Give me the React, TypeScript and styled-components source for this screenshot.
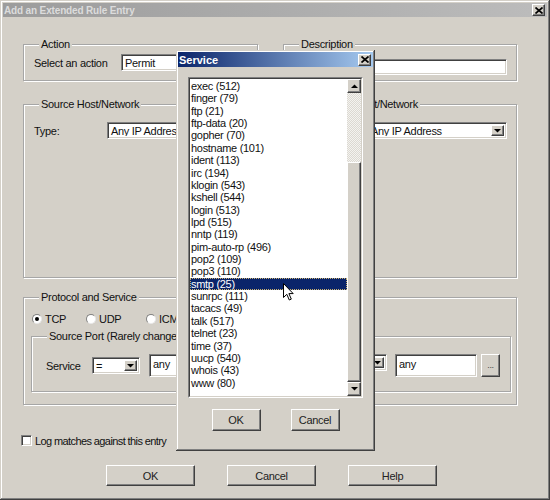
import styled, { createGlobalStyle, css } from 'styled-components';

const GlobalStyle = createGlobalStyle`
  body {
    margin: 0;
    background: #d4d0c8;
    font-family: "Liberation Sans", Arial, sans-serif;
    font-size: 11px;
    letter-spacing: -0.3px;
    color: #111;
  }
`;

const raised = css`
  background: #d4d0c8;
  border: 1px solid;
  border-color: #fff #404040 #404040 #fff;
  box-shadow: inset -1px -1px 0 #808080;
  box-sizing: border-box;
`;

const sunken = css`
  background: #fff;
  border: 1px solid;
  border-color: #808080 #fff #fff #808080;
  box-shadow: inset 1px 1px 0 #404040, inset -1px -1px 0 #d4d0c8;
  box-sizing: border-box;
`;

const Window = styled.div`
  position: relative;
  width: 550px;
  height: 500px;
  box-sizing: border-box;
  padding: 3px;
  background: #d4d0c8;
  box-shadow: inset -1px -1px 0 #404040, inset 1px 1px 0 #d4d0c8,
    inset -2px -2px 0 #808080, inset 2px 2px 0 #fff;
  overflow: hidden;
`;

const TitleBar = styled.div<{ $active?: boolean; $h: number }>`
  display: flex;
  align-items: center;
  justify-content: space-between;
  height: ${(p) => p.$h}px;
  padding: 0 2px 0 1px;
  background: ${(p) =>
    p.$active
      ? 'linear-gradient(90deg, #0a246a, #a6caf0)'
      : 'linear-gradient(90deg, #9c9c9c, #bcbcbc)'};
`;

const TitleText = styled.span<{ $active?: boolean }>`
  font-weight: bold;
  font-size: ${(p) => (p.$active ? '11px' : '10px')};
  letter-spacing: ${(p) => (p.$active ? '0' : '-0.15px')};
  color: ${(p) => (p.$active ? '#fff' : '#dcdcdc')};
  white-space: nowrap;
`;

const CloseBtn = styled.div`
  ${raised};
  width: 13px;
  height: 12px;
  display: flex;
  align-items: center;
  justify-content: center;
`;

const Body = styled.div`
  padding: 21px 30px 0 20px;
`;

const Row = styled.div<{ $cols: string; $gap: number; $mt?: number }>`
  display: grid;
  grid-template-columns: ${(p) => p.$cols};
  column-gap: ${(p) => p.$gap}px;
  margin-top: ${(p) => p.$mt ?? 0}px;
`;

const Group = styled.fieldset`
  margin: 0;
  padding: 0;
  min-width: 0;
  border: 1px solid #a6a6a6;
  box-shadow: 1px 1px 0 #fff, inset 1px 1px 0 #fff;
`;

const Legend = styled.legend`
  margin-left: 15px;
  padding: 0 2px;
  line-height: 12px;
  height: 12px;
  background: #d4d0c8;
  white-space: nowrap;
`;

const GroupBody = styled.div<{ $pad: string; $h?: number }>`
  padding: ${(p) => p.$pad};
  height: ${(p) => (p.$h ? `${p.$h}px` : 'auto')};
  box-sizing: border-box;
`;

const Field = styled.div<{ $justify?: string; $align?: string }>`
  display: flex;
  align-items: ${(p) => p.$align ?? 'center'};
  justify-content: ${(p) => p.$justify ?? 'flex-start'};
`;

const Label = styled.span<{ $w: number }>`
  width: ${(p) => p.$w}px;
  flex: none;
  white-space: nowrap;
`;

const TextInput = styled.div<{ $w?: number; $h: number; $top?: boolean }>`
  ${sunken};
  width: ${(p) => (p.$w ? `${p.$w}px` : 'auto')};
  flex: ${(p) => (p.$w ? 'none' : '1')};
  height: ${(p) => p.$h}px;
  padding: ${(p) => (p.$top ? '3px 3px 0' : '0 3px')};
  display: flex;
  align-items: ${(p) => (p.$top ? 'flex-start' : 'center')};
  white-space: nowrap;
  overflow: hidden;
`;

const Select = styled.div<{ $w?: number }>`
  ${sunken};
  width: ${(p) => (p.$w ? `${p.$w}px` : 'auto')};
  flex: ${(p) => (p.$w ? 'none' : '1')};
  height: 17px;
  padding: 2px;
  display: flex;
  align-items: stretch;
`;

const SelectText = styled.span`
  flex: 1;
  padding-left: 1px;
  line-height: 13px;
  white-space: nowrap;
  overflow: hidden;
`;

const ArrowBtn = styled.div`
  ${raised};
  width: 13px;
  flex: none;
  display: flex;
  align-items: center;
  justify-content: center;
`;

const Spacer = styled.div<{ $w: number }>`
  width: ${(p) => p.$w}px;
  flex: none;
`;

const SmallBtn = styled.div`
  ${raised};
  width: 19px;
  height: 23px;
  display: flex;
  align-items: flex-end;
  justify-content: center;
  padding-bottom: 6px;
  font-size: 9px;
  color: #444;
`;

const RadioRow = styled.div`
  display: flex;
  align-items: center;
  height: 13px;
  margin-left: 1px;
  margin-bottom: 5px;
`;

const RadioItem = styled.label<{ $w?: number }>`
  display: flex;
  align-items: center;
  gap: 3px;
  width: ${(p) => (p.$w ? `${p.$w}px` : 'auto')};
  flex: none;
`;

const RadioCircle = styled.span<{ $checked?: boolean }>`
  width: 10px;
  height: 10px;
  border-radius: 50%;
  background: #fff;
  border: 1px solid;
  border-color: #808080 #e8e8e8 #e8e8e8 #808080;
  box-sizing: border-box;
  display: flex;
  align-items: center;
  justify-content: center;
  &::after {
    content: '';
    width: 4px;
    height: 4px;
    border-radius: 50%;
    background: ${(p) => (p.$checked ? '#000' : 'transparent')};
  }
`;

const CheckRow = styled.div`
  display: flex;
  align-items: center;
  gap: 3px;
  margin: 30px 0 0 -2px;
  height: 11px;
`;

const CheckBox = styled.span`
  ${sunken};
  width: 11px;
  height: 11px;
  flex: none;
`;

const CheckLabel = styled.span`
  letter-spacing: -0.6px;
  white-space: nowrap;
`;

const ButtonRow = styled.div<{ $gap: number; $justify?: string; $ml?: number; $mt: number }>`
  display: flex;
  gap: ${(p) => p.$gap}px;
  justify-content: ${(p) => p.$justify ?? 'flex-start'};
  margin: ${(p) => p.$mt}px 0 0 ${(p) => p.$ml ?? 0}px;
`;

const Button = styled.div<{ $w: number; $h: number }>`
  ${raised};
  width: ${(p) => p.$w}px;
  height: ${(p) => p.$h}px;
  display: flex;
  align-items: center;
  justify-content: center;
  color: #222;
`;

/* popup service picker */
const Popup = styled.div`
  position: absolute;
  left: 176px;
  top: 50px;
  width: 199px;
  height: 401px;
  box-sizing: border-box;
  padding: 2px;
  background: #d4d0c8;
  box-shadow: inset -1px -1px 0 #404040, inset 1px 1px 0 #d4d0c8,
    inset -2px -2px 0 #808080, inset 2px 2px 0 #fff;
`;

const PopupBody = styled.div`
  padding: 10px 10px 0 10px;
`;

const ListBox = styled.div`
  height: 321px;
  box-sizing: border-box;
  border: 1px solid;
  border-color: #808080 #fff #fff #808080;
  display: flex;
`;

const ListInner = styled.div`
  flex: 1;
  display: flex;
  border: 1px solid;
  border-color: #404040 #d4d0c8 #d4d0c8 #404040;
  background: #fff;
  min-width: 0;
`;

const Items = styled.div`
  flex: 1;
  padding-top: 1px;
  min-width: 0;
`;

const Item = styled.div<{ $selected?: boolean }>`
  height: 12.36px;
  line-height: 12.36px;
  padding-left: 1px;
  white-space: nowrap;
  color: ${(p) => (p.$selected ? '#fff' : '#111')};
  background: ${(p) => (p.$selected ? '#0a246a' : 'transparent')};
  outline: ${(p) => (p.$selected ? '1px dotted #c8b070' : 'none')};
  outline-offset: -1px;
`;

const ScrollBar = styled.div`
  width: 14px;
  flex: none;
  display: flex;
  flex-direction: column;
`;

const ScrollBtn = styled.div`
  ${raised};
  height: 14px;
  flex: none;
  display: flex;
  align-items: center;
  justify-content: center;
`;

const Track = styled.div<{ $h: number }>`
  height: ${(p) => p.$h}px;
  flex: none;
  background: repeating-conic-gradient(#dcd9d2 0 25%, #f4f3f0 0 50%) 0 0 / 2px 2px;
`;

const Thumb = styled.div`
  ${raised};
  flex: 1;
`;

const Cursor = styled.svg`
  position: absolute;
  left: 282px;
  top: 282px;
`;

const Down = () => (
  <svg width="7" height="4" viewBox="0 0 7 4">
    <polygon points="0,0 7,0 3.5,3.5" fill="#000" />
  </svg>
);

const Up = () => (
  <svg width="7" height="4" viewBox="0 0 7 4">
    <polygon points="0,4 7,4 3.5,0.5" fill="#000" />
  </svg>
);

const XGlyph = () => (
  <svg width="8" height="7" viewBox="0 0 8 7">
    <path d="M0.5 0.5 L7.5 6.5 M7.5 0.5 L0.5 6.5" stroke="#000" strokeWidth="1.7" />
  </svg>
);

const services = [
  'exec (512)', 'finger (79)', 'ftp (21)', 'ftp-data (20)', 'gopher (70)',
  'hostname (101)', 'ident (113)', 'irc (194)', 'klogin (543)', 'kshell (544)',
  'login (513)', 'lpd (515)', 'nntp (119)', 'pim-auto-rp (496)', 'pop2 (109)',
  'pop3 (110)', 'smtp (25)', 'sunrpc (111)', 'tacacs (49)', 'talk (517)',
  'telnet (23)', 'time (37)', 'uucp (540)', 'whois (43)', 'www (80)',
];

export default function App() {
  return (
    <>
      <GlobalStyle />
      <Window>
        <TitleBar $h={14}>
          <TitleText>Add an Extended Rule Entry</TitleText>
          <CloseBtn><XGlyph /></CloseBtn>
        </TitleBar>

        <Body>
          <Row $cols="235px 234px" $gap={25}>
            <Group>
              <Legend>Action</Legend>
              <GroupBody $pad="4px 9px 8px 10px">
                <Field>
                  <Label $w={87}>Select an action</Label>
                  <TextInput $w={128} $h={17}>Permit</TextInput>
                </Field>
              </GroupBody>
            </Group>
            <Group>
              <Legend>Description</Legend>
              <GroupBody $pad="9px 9px 5px 10px">
                <Field>
                  <TextInput $h={16} />
                </Field>
              </GroupBody>
            </Group>
          </Row>

          <Row $cols="235px 234px" $gap={25} $mt={17}>
            <Group>
              <Legend>Source Host/Network</Legend>
              <GroupBody $pad="12px 9px 0 10px" $h={167}>
                <Field>
                  <Label $w={73}>Type:</Label>
                  <Select>
                    <SelectText>Any IP Address</SelectText>
                    <ArrowBtn><Down /></ArrowBtn>
                  </Select>
                </Field>
              </GroupBody>
            </Group>
            <Group>
              <Legend>Destination Host/Network</Legend>
              <GroupBody $pad="12px 9px 0 10px" $h={167}>
                <Field>
                  <Label $w={73}>Type:</Label>
                  <Select>
                    <SelectText>Any IP Address</SelectText>
                    <ArrowBtn><Down /></ArrowBtn>
                  </Select>
                </Field>
              </GroupBody>
            </Group>
          </Row>

          <Row $cols="1fr" $gap={0} $mt={13}>
            <Group>
              <Legend>Protocol and Service</Legend>
              <GroupBody $pad="9px 5px 12px 7px">
                <RadioRow>
                  <RadioItem $w={54}><RadioCircle $checked />TCP</RadioItem>
                  <RadioItem $w={60}><RadioCircle />UDP</RadioItem>
                  <RadioItem><RadioCircle />ICMP</RadioItem>
                </RadioRow>
                <Row $cols="1fr 1fr" $gap={8}>
                  <Group>
                    <Legend>Source Port (Rarely changed)</Legend>
                    <GroupBody $pad="12px 10px 14px 14px">
                      <Field>
                        <Label $w={46}>Service</Label>
                        <Select $w={48}>
                          <SelectText>=</SelectText>
                          <ArrowBtn><Down /></ArrowBtn>
                        </Select>
                        <Spacer $w={9} />
                        <TextInput $w={110} $h={23} $top>any</TextInput>
                      </Field>
                    </GroupBody>
                  </Group>
                  <Group>
                    <Legend>Destination Port</Legend>
                    <GroupBody $pad="12px 10px 14px 14px">
                      <Field $justify="flex-end" $align="flex-start">
                        <Label $w={46}>Service</Label>
                        <Select $w={51}>
                          <SelectText>=</SelectText>
                          <ArrowBtn><Down /></ArrowBtn>
                        </Select>
                        <Spacer $w={8} />
                        <TextInput $w={82} $h={23} $top>any</TextInput>
                        <Spacer $w={4} />
                        <SmallBtn>...</SmallBtn>
                      </Field>
                    </GroupBody>
                  </Group>
                </Row>
              </GroupBody>
            </Group>
          </Row>

          <CheckRow>
            <CheckBox />
            <CheckLabel>Log matches against this entry</CheckLabel>
          </CheckRow>

          <ButtonRow $gap={32} $ml={83} $mt={19}>
            <Button $w={89} $h={21}>OK</Button>
            <Button $w={89} $h={21}>Cancel</Button>
            <Button $w={89} $h={21}>Help</Button>
          </ButtonRow>
        </Body>

        <Popup>
          <TitleBar $active $h={15}>
            <TitleText $active>Service</TitleText>
            <CloseBtn><XGlyph /></CloseBtn>
          </TitleBar>
          <PopupBody>
            <ListBox>
              <ListInner>
                <Items>
                  {services.map((s) => (
                    <Item key={s} $selected={s === 'smtp (25)'}>{s}</Item>
                  ))}
                </Items>
                <ScrollBar>
                  <ScrollBtn><Up /></ScrollBtn>
                  <Track $h={69} />
                  <Thumb />
                  <ScrollBtn><Down /></ScrollBtn>
                </ScrollBar>
              </ListInner>
            </ListBox>
            <ButtonRow $gap={30} $justify="center" $mt={11}>
              <Button $w={49} $h={22}>OK</Button>
              <Button $w={49} $h={22}>Cancel</Button>
            </ButtonRow>
          </PopupBody>
        </Popup>

        <Cursor width="13" height="20" viewBox="0 0 13 20">
          <path
            d="M1.5 1.5 L1.5 15.5 L4.8 12.3 L7.3 18 L9.3 17.1 L6.9 11.6 L11.2 11.6 Z"
            fill="#fff"
            stroke="#000"
            strokeWidth="1"
          />
        </Cursor>
      </Window>
    </>
  );
}
